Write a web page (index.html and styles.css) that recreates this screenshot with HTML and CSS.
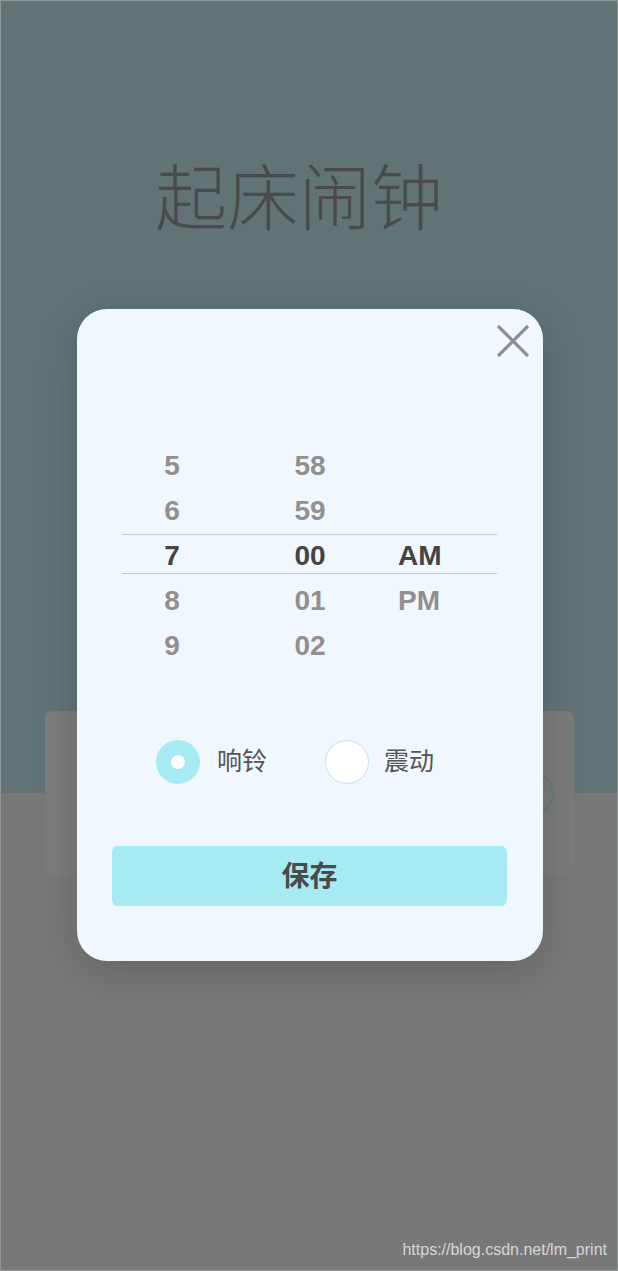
FILE: index.html
```html
<!DOCTYPE html>
<html lang="zh">
<head>
<meta charset="utf-8">
<title>起床闹钟</title>
<link rel="stylesheet" href="styles.css">
</head>
<body>
<div class="page">
  <header class="header">
    <h1 class="title">起床闹钟</h1>
  </header>
  <div class="card">
    <span class="card-toggle"></span>
  </div>
  <div class="watermark">https://blog.csdn.net/lm_print</div>

  <div class="modal">
    <button class="close" aria-label="关闭">
      <svg width="32" height="32" viewBox="0 0 32 32">
        <path d="M1 1 L31 31 M31 1 L1 31" stroke="#8d8d8d" stroke-width="3.2" fill="none"/>
      </svg>
    </button>

    <div class="picker">
      <div class="band"></div>
      <div class="col col-hour">
        <div class="cell">5</div>
        <div class="cell">6</div>
        <div class="cell sel">7</div>
        <div class="cell">8</div>
        <div class="cell">9</div>
      </div>
      <div class="col col-min">
        <div class="cell">58</div>
        <div class="cell">59</div>
        <div class="cell sel">00</div>
        <div class="cell">01</div>
        <div class="cell">02</div>
      </div>
      <div class="col col-ampm">
        <div class="cell"></div>
        <div class="cell"></div>
        <div class="cell sel">AM</div>
        <div class="cell">PM</div>
        <div class="cell"></div>
      </div>
    </div>

    <div class="radios">
      <label class="radio">
        <span class="dot on"></span>
        <span class="radio-text">响铃</span>
      </label>
      <label class="radio radio-2">
        <span class="dot off"></span>
        <span class="radio-text">震动</span>
      </label>
    </div>

    <button class="save">保存</button>
  </div>
</div>
</body>
</html>
```

FILE: styles.css
```css
* { box-sizing: border-box; }

html, body {
  margin: 0;
  padding: 0;
}

body {
  width: 618px;
  height: 1271px;
  font-family: "Liberation Sans", "Noto Sans CJK SC", sans-serif;
  overflow: hidden;
}

.page {
  position: relative;
  width: 618px;
  height: 1271px;
  border: 1px solid #8e9696;
  background: #787878;
  overflow: hidden;
}

.header {
  height: 792px;
  background: #617375;
  padding-top: 156px;
}

.title {
  margin: 0;
  padding-right: 20px;
  text-align: center;
  font-family: "Noto Sans CJK SC", sans-serif;
  font-weight: 300;
  font-size: 72px;
  line-height: 72px;
  color: #4a4a4a;
}

.card {
  margin: -82px 43px 0 44px;
  height: 164px;
  background: #7b7b7b;
  border-radius: 8px;
  display: flex;
  align-items: center;
  justify-content: flex-end;
  padding-right: 20px;
}

.card-toggle {
  width: 43px;
  height: 43px;
  border-radius: 50%;
  border: 2px solid #627a7c;
}

.watermark {
  position: absolute;
  right: 10px;
  bottom: 11px;
  font-family: "Liberation Sans", sans-serif;
  font-size: 16px;
  color: #d6d6d6;
}

.modal {
  position: absolute;
  left: 76px;
  top: 308px;
  width: 466px;
  height: 652px;
  border-radius: 30px;
  background: #f0f7ff;
  box-shadow: 0 12px 40px rgba(0, 0, 0, 0.16);
  padding-top: 134px;
}

.close {
  position: absolute;
  top: 16px;
  right: 14px;
  width: 32px;
  height: 32px;
  padding: 0;
  border: 0;
  background: none;
  display: block;
}
.close svg { display: block; }

.picker {
  position: relative;
  margin-left: 45px;
  width: 375px;
  display: grid;
  grid-template-columns: 100px 176px 42px;
}

.band {
  position: absolute;
  left: 0;
  right: 0;
  top: 91px;
  height: 40px;
  border-top: 1px solid #c8c8c8;
  border-bottom: 1px solid #c8c8c8;
}

.col {
  display: flex;
  flex-direction: column;
}

.cell {
  height: 45px;
  line-height: 45px;
  text-align: center;
  font-family: "Liberation Sans", sans-serif;
  font-weight: bold;
  font-size: 28px;
  color: #938f8f;
}

.cell.sel {
  color: #464343;
}

.radios {
  margin-top: 72px;
  padding-left: 79px;
  display: flex;
  align-items: center;
  height: 44px;
}

.radio {
  display: flex;
  align-items: center;
}

.radio-2 {
  margin-left: 58px;
}

.dot {
  width: 44px;
  height: 44px;
  border-radius: 50%;
  display: flex;
  align-items: center;
  justify-content: center;
}

.dot.on {
  background: #a6ebf3;
}
.dot.on::after {
  content: "";
  width: 14px;
  height: 14px;
  border-radius: 50%;
  background: #ffffff;
}

.dot.off {
  background: #ffffff;
  border: 1.5px solid #bfe0fa;
}

.radio-text {
  margin-left: 17px;
  padding-bottom: 6px;
  font-family: "Noto Sans CJK SC", sans-serif;
  font-size: 25px;
  color: #555555;
}

.radio-2 .radio-text {
  margin-left: 15px;
}

.save {
  display: block;
  margin: 62px 0 0 35px;
  width: 395px;
  height: 60px;
  border: 0;
  border-radius: 6px;
  background: #a6ebf3;
  font-family: "Noto Sans CJK SC", sans-serif;
  font-weight: bold;
  font-size: 28px;
  color: #4a4a4a;
  padding: 0 0 4px 0;
}
```
